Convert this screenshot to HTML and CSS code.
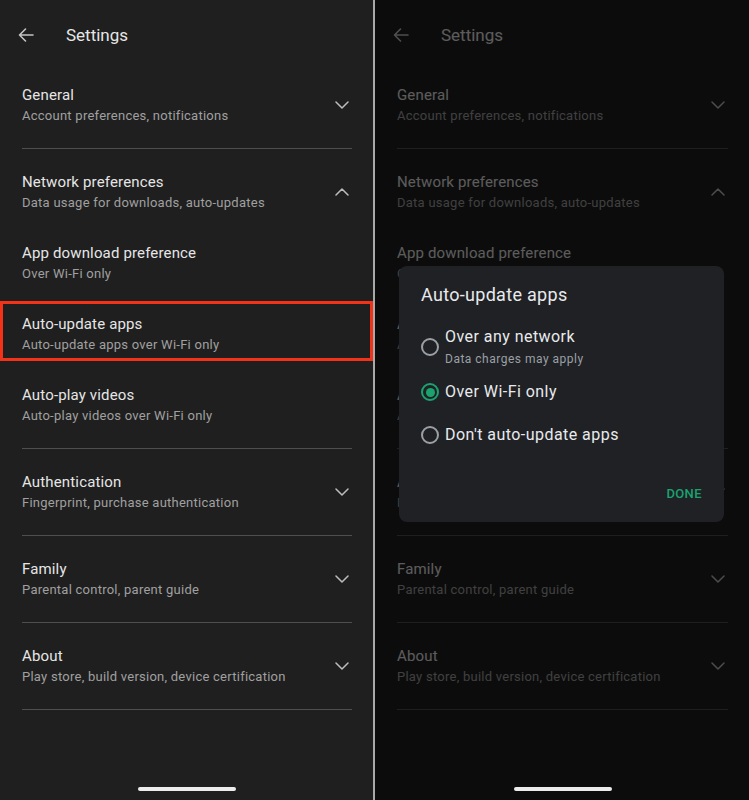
FILE: index.html
```html
<!DOCTYPE html>
<html lang="en">
<head>
<meta charset="utf-8">
<title>Settings</title>
<link rel="stylesheet" href="styles.css">
</head>
<body>
<div class="screen">
  <section class="panel">
    <header class="appbar">
      <svg class="back" width="16" height="14" viewBox="0 0 16 14"><path d="M15 7H1.5M7.5 1L1.5 7l6 6" fill="none" stroke="currentColor" stroke-width="1.6" stroke-linecap="round" stroke-linejoin="round"/></svg>
      <h1 class="appbar-title">Settings</h1>
    </header>
    <div class="group">
      <div class="row">
        <div class="row-text"><span class="title">General</span><span class="subtitle">Account preferences, notifications</span></div>
        <svg class="chev" width="14" height="8" viewBox="0 0 14 8"><path d="M1 1l6 6 6-6" fill="none" stroke="currentColor" stroke-width="1.5" stroke-linecap="round" stroke-linejoin="round"/></svg>
      </div>
    </div>
    <div class="group">
      <div class="row">
        <div class="row-text"><span class="title">Network preferences</span><span class="subtitle">Data usage for downloads, auto-updates</span></div>
        <svg class="chev" width="14" height="8" viewBox="0 0 14 8"><path d="M1 7l6-6 6 6" fill="none" stroke="currentColor" stroke-width="1.5" stroke-linecap="round" stroke-linejoin="round"/></svg>
      </div>
      <div class="row">
        <div class="row-text"><span class="title">App download preference</span><span class="subtitle">Over Wi-Fi only</span></div>
      </div>
      <div class="row row--marked">
        <div class="row-text"><span class="title">Auto-update apps</span><span class="subtitle">Auto-update apps over Wi-Fi only</span></div>
        <div class="highlight"></div>
      </div>
      <div class="row">
        <div class="row-text"><span class="title">Auto-play videos</span><span class="subtitle">Auto-play videos over Wi-Fi only</span></div>
      </div>
    </div>
    <div class="group">
      <div class="row">
        <div class="row-text"><span class="title">Authentication</span><span class="subtitle">Fingerprint, purchase authentication</span></div>
        <svg class="chev" width="14" height="8" viewBox="0 0 14 8"><path d="M1 1l6 6 6-6" fill="none" stroke="currentColor" stroke-width="1.5" stroke-linecap="round" stroke-linejoin="round"/></svg>
      </div>
    </div>
    <div class="group">
      <div class="row">
        <div class="row-text"><span class="title">Family</span><span class="subtitle">Parental control, parent guide</span></div>
        <svg class="chev" width="14" height="8" viewBox="0 0 14 8"><path d="M1 1l6 6 6-6" fill="none" stroke="currentColor" stroke-width="1.5" stroke-linecap="round" stroke-linejoin="round"/></svg>
      </div>
    </div>
    <div class="group">
      <div class="row">
        <div class="row-text"><span class="title">About</span><span class="subtitle">Play store, build version, device certification</span></div>
        <svg class="chev" width="14" height="8" viewBox="0 0 14 8"><path d="M1 1l6 6 6-6" fill="none" stroke="currentColor" stroke-width="1.5" stroke-linecap="round" stroke-linejoin="round"/></svg>
      </div>
    </div>
    <div class="spacer"></div>
    <div class="home-bar"></div>
  </section>

  <div class="split"></div>

  <section class="panel panel--dim">
    <header class="appbar">
      <svg class="back" width="16" height="14" viewBox="0 0 16 14"><path d="M15 7H1.5M7.5 1L1.5 7l6 6" fill="none" stroke="currentColor" stroke-width="1.6" stroke-linecap="round" stroke-linejoin="round"/></svg>
      <h1 class="appbar-title">Settings</h1>
    </header>
    <div class="group">
      <div class="row">
        <div class="row-text"><span class="title">General</span><span class="subtitle">Account preferences, notifications</span></div>
        <svg class="chev" width="14" height="8" viewBox="0 0 14 8"><path d="M1 1l6 6 6-6" fill="none" stroke="currentColor" stroke-width="1.5" stroke-linecap="round" stroke-linejoin="round"/></svg>
      </div>
    </div>
    <div class="group">
      <div class="row">
        <div class="row-text"><span class="title">Network preferences</span><span class="subtitle">Data usage for downloads, auto-updates</span></div>
        <svg class="chev" width="14" height="8" viewBox="0 0 14 8"><path d="M1 7l6-6 6 6" fill="none" stroke="currentColor" stroke-width="1.5" stroke-linecap="round" stroke-linejoin="round"/></svg>
      </div>
      <div class="row">
        <div class="row-text"><span class="title">App download preference</span><span class="subtitle">Over Wi-Fi only</span></div>
      </div>
      <div class="row">
        <div class="row-text"><span class="title">Auto-update apps</span><span class="subtitle">Auto-update apps over Wi-Fi only</span></div>
      </div>
      <div class="row">
        <div class="row-text"><span class="title">Auto-play videos</span><span class="subtitle">Auto-play videos over Wi-Fi only</span></div>
      </div>
    </div>
    <div class="group">
      <div class="row">
        <div class="row-text"><span class="title">Authentication</span><span class="subtitle">Fingerprint, purchase authentication</span></div>
        <svg class="chev" width="14" height="8" viewBox="0 0 14 8"><path d="M1 1l6 6 6-6" fill="none" stroke="currentColor" stroke-width="1.5" stroke-linecap="round" stroke-linejoin="round"/></svg>
      </div>
    </div>
    <div class="group">
      <div class="row">
        <div class="row-text"><span class="title">Family</span><span class="subtitle">Parental control, parent guide</span></div>
        <svg class="chev" width="14" height="8" viewBox="0 0 14 8"><path d="M1 1l6 6 6-6" fill="none" stroke="currentColor" stroke-width="1.5" stroke-linecap="round" stroke-linejoin="round"/></svg>
      </div>
    </div>
    <div class="group">
      <div class="row">
        <div class="row-text"><span class="title">About</span><span class="subtitle">Play store, build version, device certification</span></div>
        <svg class="chev" width="14" height="8" viewBox="0 0 14 8"><path d="M1 1l6 6 6-6" fill="none" stroke="currentColor" stroke-width="1.5" stroke-linecap="round" stroke-linejoin="round"/></svg>
      </div>
    </div>
    <div class="spacer"></div>
    <div class="scrim"></div>
    <div class="dialog">
      <h2 class="dialog-title">Auto-update apps</h2>
      <div class="options">
        <div class="option option--first">
          <span class="radio"></span>
          <div class="option-text"><span class="option-label">Over any network</span><span class="option-hint">Data charges may apply</span></div>
        </div>
        <div class="option option--second">
          <span class="radio radio--on"></span>
          <div class="option-text"><span class="option-label">Over Wi-Fi only</span></div>
        </div>
        <div class="option option--third">
          <span class="radio"></span>
          <div class="option-text"><span class="option-label">Don't auto-update apps</span></div>
        </div>
      </div>
      <div class="dialog-actions"><span class="done">DONE</span></div>
    </div>
    <div class="home-bar home-bar--top"></div>
  </section>
</div>
</body>
</html>
```

FILE: styles.css
```css
* { box-sizing: border-box; }
html, body { margin: 0; padding: 0; }
body {
  background: #1f1f1f;
  font-family: Roboto, "Liberation Sans", sans-serif;
  width: 749px;
  height: 800px;
  overflow: hidden;
}
.screen {
  display: flex;
  height: 800px;
}
.panel {
  position: relative;
  display: flex;
  flex-direction: column;
  width: 373px;
  flex: 0 0 373px;
  background: #1f1f1f;
}
.panel--dim {
  flex: 1 1 auto;
  width: auto;
}
.split {
  flex: 0 0 2px;
  background: #a9a9a9;
}
.appbar {
  display: flex;
  align-items: center;
  height: 62px;
  padding: 8px 0 0 18px;
  color: #c4c4c4;
}
.back { margin-right: 32px; display: block; }
.appbar-title {
  margin: 0;
  font-size: 17px;
  font-weight: 400;
  color: #e6e6e6;
}
.group {
  display: flex;
  flex-direction: column;
  gap: 29px;
  margin: 0 21px 0 22px;
  padding: 22px 0 22px;
  border-bottom: 1px solid #4e4e4e;
}
.row {
  position: relative;
  display: flex;
  align-items: center;
  justify-content: space-between;
}
.row-text {
  display: flex;
  flex-direction: column;
}
.title {
  font-size: 15px;
  line-height: 22px;
  color: #e6e6e6;
  letter-spacing: 0.15px;
}
.subtitle {
  font-size: 13px;
  line-height: 20px;
  color: #a0a0a0;
  letter-spacing: 0.25px;
}
.chev {
  color: #bdbdbd;
  margin-right: 3px;
  display: block;
}
.highlight {
  position: absolute;
  top: -12px;
  bottom: -6px;
  left: -22px;
  right: -21px;
  border: 3px solid #f2331a;
}
.spacer { flex: 1; }
.home-bar {
  align-self: center;
  width: 98px;
  height: 4px;
  border-radius: 2px;
  background: #ececec;
  margin-bottom: 9px;
  margin-left: 1px;
}
.home-bar--top {
  position: relative;
  z-index: 3;
}
.scrim {
  position: absolute;
  inset: 0;
  background: rgba(0, 0, 0, 0.6);
  z-index: 1;
}
.dialog {
  position: absolute;
  z-index: 2;
  top: 266px;
  left: 24px;
  right: 25px;
  height: 256px;
  background: #202124;
  border-radius: 8px;
  padding: 17px 22px 20px;
  display: flex;
  flex-direction: column;
}
.dialog-title {
  margin: 0;
  font-size: 18px;
  line-height: 24px;
  font-weight: 400;
  color: #e8eaed;
  letter-spacing: 0.3px;
}
.options {
  display: flex;
  flex-direction: column;
  margin-top: 19px;
}
.option {
  display: flex;
  align-items: center;
}
.option--second { margin-top: 13px; }
.option--third { margin-top: 21px; }
.radio {
  flex: 0 0 18px;
  width: 18px;
  height: 18px;
  border: 2px solid #9aa0a6;
  border-radius: 50%;
  margin-right: 6px;
  position: relative;
}
.radio--on {
  border-color: #1aa36f;
}
.radio--on::after {
  content: "";
  position: absolute;
  top: 2.5px;
  left: 2.5px;
  width: 9px;
  height: 9px;
  border-radius: 50%;
  background: #1aa36f;
}
.option-text {
  display: flex;
  flex-direction: column;
}
.option-label {
  font-size: 16px;
  line-height: 22px;
  color: #e8eaed;
  letter-spacing: 0.45px;
}
.option-hint {
  margin-top: 2px;
  font-size: 12px;
  line-height: 18px;
  color: #9aa0a6;
  letter-spacing: 0.5px;
}
.dialog-actions {
  margin-top: auto;
  display: flex;
  justify-content: flex-end;
}
.done {
  font-size: 13px;
  line-height: 16px;
  font-weight: 500;
  letter-spacing: 0.4px;
  color: #1aa36f;
}
```
